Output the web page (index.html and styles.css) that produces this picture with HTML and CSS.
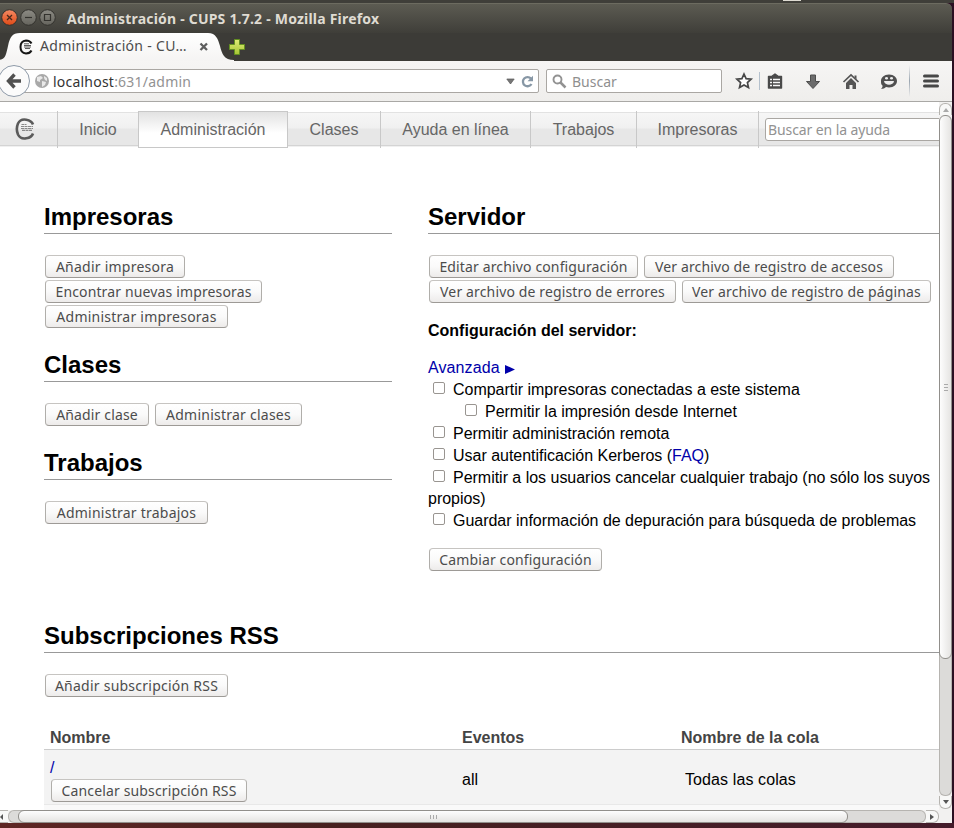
FILE: index.html
```html
<!DOCTYPE html>
<html lang="es">
<head>
<meta charset="utf-8">
<title>Administración - CUPS 1.7.2</title>
<link rel="stylesheet" href="styles.css">
</head>
<body>
<div class="desktop-top"><span class="glint"></span></div>
<div class="window">
  <header class="titlebar">
    <svg class="controls" width="57" height="20" viewBox="0 0 57 20">
      <defs>
        <linearGradient id="red" x1="0" y1="0" x2="0" y2="1"><stop offset="0" stop-color="#f58a64"/><stop offset="1" stop-color="#df4a16"/></linearGradient>
        <linearGradient id="grey" x1="0" y1="0" x2="0" y2="1"><stop offset="0" stop-color="#8c8b84"/><stop offset="1" stop-color="#65645d"/></linearGradient>
      </defs>
      <circle cx="9.500" cy="9.500" r="7.800" fill="url(#red)" stroke="#33322e"/>
      <path d="M7 7l5 5M12 7l-5 5" stroke="#47281c" stroke-width="1.300"/>
      <circle cx="28.500" cy="9.500" r="7.800" fill="url(#grey)" stroke="#33322e"/>
      <path d="M25 9.500h7" stroke="#33322e" stroke-width="1.200"/>
      <circle cx="47.500" cy="9.500" r="7.800" fill="url(#grey)" stroke="#33322e"/>
      <path d="M44.500 6.500h6v6h-6z" fill="none" stroke="#33322e" stroke-width="1.200"/>
    </svg>
    <span class="window-title">Administración - CUPS 1.7.2 - Mozilla Firefox</span>
  </header>

  <div class="tabstrip">
    <div class="tab">
      <svg class="tab-shape" width="234" height="29" viewBox="0 0 234 29">
        <defs><linearGradient id="tabfill" x1="0" y1="0" x2="0" y2="1"><stop offset="0" stop-color="#fff"/><stop offset="1" stop-color="#f5f4f3"/></linearGradient></defs>
        <path d="M-2 28C6 28 6 22 8 14C10 5 12 1 20 1H208C216 1 218 7 220 14C222 22 224 28 234 28V29H-2z" fill="url(#tabfill)"/>
      </svg>
      <div class="tab-content">
        <svg width="14" height="16" viewBox="0 0 14 16"><path d="M12.500 4.500Q11 1.500 7 1.500Q1.500 2 1.500 8T7 14.500Q11 14.500 12.500 11.500" fill="none" stroke="#161616" stroke-width="2"/><path d="M5 4.800h5M5 6.500h7M5 8h7M6 9.500h5" stroke="#333" stroke-width=".8"/></svg>
        <span class="tab-title">Administración - CU…</span>
        <svg width="10" height="10" viewBox="0 0 10 10"><path d="M1.500 1.500l6.500 6.500M8 1.500l-6.500 6.500" stroke="#5d5d5d" stroke-width="2.300"/></svg>
      </div>
    </div>
    <svg class="new-tab" width="18" height="18" viewBox="0 0 18 18"><defs><linearGradient id="plus" x1="0" y1="0" x2="0" y2="1"><stop offset="0" stop-color="#e0ec77"/><stop offset="1" stop-color="#a5c434"/></linearGradient></defs><path d="M6.500 1.500h5v5h5v5h-5v5h-5v-5h-5v-5h5z" fill="url(#plus)" stroke="#638f20"/></svg>
  </div>

  <div class="toolbar">
    <svg class="back" width="30" height="34" viewBox="0 0 30 34"><circle cx="14" cy="17" r="15.500" fill="#fbfbfb" stroke="#8e9aa8"/><path d="M14.500 10.500L8.500 17l6 6.500M9 17h12" fill="none" stroke="#505050" stroke-width="3.400"/></svg>
    <div class="urlbar">
      <svg width="14" height="14" viewBox="0 0 14 14"><circle cx="7" cy="7" r="7" fill="#a9a9a9"/><path d="M2 3l4-1 2 2-3 2v2L2 7zM9 2l3 2v3l-2-1-1-2zM7 7l4 1-1 3-3 2z" fill="#e9e9e9"/></svg>
      <span class="host">localhost</span><span class="path">:631/admin</span>
      <svg class="dropmark" width="9" height="7" viewBox="0 0 9 7"><path d="M.8 1h7.400L4.500 6z" fill="#777" stroke="#555" stroke-width=".7"/></svg>
      <svg width="13" height="13" viewBox="0 0 13 13"><path d="M10 3.600A4.600 4.600 0 1 0 10.500 9" fill="none" stroke="#8797a5" stroke-width="2.300"/><path d="M6.500 6.200h5.500V.7z" fill="#8797a5"/></svg>
    </div>
    <div class="searchbar">
      <svg width="15" height="15" viewBox="0 0 15 15"><circle cx="5.500" cy="5.500" r="4" fill="none" stroke="#929292" stroke-width="1.900"/><path d="M8.500 8.500l5 5" stroke="#929292" stroke-width="2.500"/></svg>
      <span>Buscar</span>
    </div>
    <svg class="tools" width="230" height="40" viewBox="0 0 230 40">
      <defs><linearGradient id="sep" x1="0" y1="0" x2="0" y2="1"><stop offset="0" stop-color="#9aa5b0" stop-opacity="0"/><stop offset=".5" stop-color="#9aa5b0"/><stop offset="1" stop-color="#9aa5b0" stop-opacity="0"/></linearGradient></defs>
      <path d="M22 13l2.100 4.600 5 .5-3.700 3.500 1.100 5-4.500-2.600-4.500 2.600 1.100-5-3.700-3.500 5-.5z" fill="#fff" stroke="#474747" stroke-width="1.700"/>
      <path d="M37.500 11v18" stroke="#b5c1cd"/>
      <path d="M46.500 15.500h3l3.500-2.500 3.500 2.500h3v11.500h-13z" fill="#494949" stroke="#494949" stroke-width="1.400" stroke-linejoin="round"/>
      <path d="M48 18.500h2M48 21.500h2M48 24.500h2M51 18.500h7M51 21.500h7M51 24.500h7" stroke="#f7f7f7" stroke-width="1.700"/>
      <path d="M88.500 14h5v6.500h4L91 27.500l-6.500-7h4z" fill="#6c6c6c" stroke="#4d4d4d"/>
      <path d="M121.500 21L129 14l7.500 7" fill="none" stroke="#555" stroke-width="1.700"/><path d="M124 22l5-5 5 5v6h-3.500v-4h-3v4H124zM132.500 14.500h2v4l-2-2z" fill="#555"/>
      <path d="M167 13.500c5 0 8 3 8 6.500s-3 6.500-8 6.500c-1.200 0-2 0-3-.4-1 1.200-3 2-5 2 1-1 1.500-2 1.600-3.300C159 23.500 159 22 159 20c0-3.500 3-6.500 8-6.500z" fill="#505050"/>
      <ellipse cx="164.500" cy="17.300" rx="1.500" ry="1.200" fill="#eee"/><ellipse cx="169.500" cy="17.300" rx="1.500" ry="1.200" fill="#eee"/><path d="M162 20h10c-.5 5-9.500 5-10 0z" fill="#eee"/>
      <path d="M187 4h1v32h-1z" fill="url(#sep)"/>
      <path d="M202.500 15h13M202.500 20h13M202.500 25h13" stroke="#474747" stroke-width="3" stroke-linecap="round"/>
    </svg>
  </div>

  <div class="viewport">
    <main class="page">
      <nav class="nav">
        <a class="logo"><svg width="20" height="22" viewBox="0 0 20 22"><path d="M18 6.500C16.500 2 6.500-1.500 3 5.500C1.500 9 1.500 13 3 16.500C6.500 23.500 16.500 20 18 15.500" fill="none" stroke="#5a5a5a" stroke-width="2.600"/><path d="M6.500 6.500h5M6 8.500h12M6 10.500h12M7 12.400h10" stroke="#888" stroke-width="1.100" stroke-dasharray="3 .5"/></svg></a>
        <a class="n-inicio">Inicio</a><a class="n-admin active">Administración</a><a class="n-clases">Clases</a><a class="n-ayuda">Ayuda en línea</a><a class="n-trabajos">Trabajos</a><a class="n-impresoras">Impresoras</a>
        <div class="help"><div class="help-input">Buscar en la ayuda</div></div>
      </nav>
      <div class="columns">
        <section class="left">
          <h2>Impresoras</h2>
          <div class="buttons"><button class="w140">Añadir impresora</button></div>
          <div class="buttons"><button class="w217">Encontrar nuevas impresoras</button></div>
          <div class="buttons"><button class="w183">Administrar impresoras</button></div>
          <h2>Clases</h2>
          <div class="buttons"><button class="w104">Añadir clase</button><button class="w147">Administrar clases</button></div>
          <h2>Trabajos</h2>
          <div class="buttons"><button class="w163">Administrar trabajos</button></div>
        </section>
        <section class="right">
          <h2>Servidor</h2>
          <div class="buttons"><button class="w209">Editar archivo configuración</button><button class="w250">Ver archivo de registro de accesos</button></div>
          <div class="buttons"><button class="w247">Ver archivo de registro de errores</button><button class="w249">Ver archivo de registro de páginas</button></div>
          <p class="config-title">Configuración del servidor:</p>
          <div class="options">
            <div class="option"><a class="link advanced">Avanzada<svg width="10" height="9" viewBox="0 0 10 9"><path d="M0 0l10 4.500L0 9z" fill="#00a"/></svg></a></div>
            <div class="option"><i class="check"></i>Compartir impresoras conectadas a este sistema</div>
            <div class="option nested"><i class="check"></i>Permitir la impresión desde Internet</div>
            <div class="option"><i class="check"></i>Permitir administración remota</div>
            <div class="option"><i class="check"></i>Usar autentificación Kerberos (<a class="link">FAQ</a>)</div>
            <div class="option"><i class="check"></i>Permitir a los usuarios cancelar cualquier trabajo (no sólo los suyos</div>
            <div class="option wrapped">propios)</div>
            <div class="option"><i class="check"></i>Guardar información de depuración para búsqueda de problemas</div>
          </div>
          <div class="buttons"><button class="w173">Cambiar configuración</button></div>
        </section>
      </div>
      <section class="rss">
        <h2>Subscripciones RSS</h2>
        <div class="buttons"><button class="w183">Añadir subscripción RSS</button></div>
        <div class="row head"><span>Nombre</span><span>Eventos</span><span>Nombre de la cola</span></div>
        <div class="row body">
          <div class="name"><a class="link">/</a><button class="w196">Cancelar subscripción RSS</button></div>
          <span>all</span><span class="queue">Todas las colas</span>
        </div>
        <div class="next-row"></div>
      </section>
    </main>
    <div class="vscroll">
      <div class="v-up"><svg width="6" height="4" viewBox="0 0 6 4"><path d="M3 0l3 4H0z" fill="#aaa"/></svg></div>
      <div class="v-thumb"><i></i><i></i><i></i></div>
      <div class="v-track"></div>
      <div class="v-down"><svg width="6" height="4" viewBox="0 0 6 4"><path d="M0 0h6L3 4z" fill="#555"/></svg></div>
    </div>
  </div>
  <div class="hscroll">
    <div class="h-left"><svg width="3" height="6" viewBox="0 0 3 6"><path d="M3 0v6L0 3z" fill="#555"/></svg></div>
    <div class="h-track-left"></div>
    <div class="h-thumb"><i></i><i></i><i></i></div>
    <div class="h-track"></div>
    <div class="h-right"><svg width="4" height="6" viewBox="0 0 4 6"><path d="M0 0v6l4-3z" fill="#555"/></svg></div>
  </div>
</div>
</body>
</html>
```
FILE: styles.css
```css
* { box-sizing: border-box; }
body {
  margin: 0; width: 954px; height: 828px; overflow: hidden;
  background: linear-gradient(90deg, #5f2624, #47201f 35%, #451c2b);
  font: 16px/21px "Liberation Sans", Arial, sans-serif; color: #000;
}
svg { display: block; flex: none; }
.desktop-top { height: 3px; background: #3f3e39; padding-left: 783px; }
.glint { display: block; width: 18px; height: 1px; background: #dedbd2; }
.window { width: 954px; height: 820px; border-right: 2px solid #2b0f22; background: linear-gradient(#2b0f22 0 20px, #f4f3f2 20px); }

.titlebar, .tabstrip, .toolbar, .searchbar, .urlbar, .tab-title, button, .help-input {
  font-family: "Noto Sans", "Open Sans", sans-serif;
}
.titlebar {
  height: 30px; display: flex; align-items: center; padding-bottom: 1px;
  background: linear-gradient(#5c5b52, #3f3e39); border-top: 1px solid #6c6b60; border-top-right-radius: 6px;
}
.controls { margin-right: 10px; }
.window-title { font-size: 14px; font-weight: 700; color: #dfdbd2; white-space: nowrap; letter-spacing: .21px; }
.tabstrip { height: 28px; display: flex; background: #3c3b37; }
.tab { width: 228px; height: 28px; position: relative; }
.tab-shape { position: absolute; left: 0; top: -1px; }
.tab-content { position: relative; display: flex; align-items: center; height: 28px; padding-left: 19px; }
.tab-title { font-size: 14px; line-height: 20px; color: #4c4c4c; margin: 0 0 2px 7px; width: 159px; white-space: nowrap; letter-spacing: .3px; }
.new-tab { margin-top: 5px; }
.toolbar {
  height: 41px; display: flex; align-items: center;
  background: linear-gradient(#f6f5f4, #efeeec); border-bottom: 1px solid #a9a8a5;
}
.back { margin-right: -8px; position: relative; z-index: 1; }
.urlbar {
  width: 517px; height: 24px; display: flex; align-items: center; padding: 0 4px 0 12px;
  background: #fff; border: 1px solid #aaa7a3; border-radius: 2px; font-size: 14px; flex: none; letter-spacing: .22px;
}
.host { color: #333; margin-left: 4px; }
.path { color: #929292; }
.dropmark { margin-left: auto; margin-right: 6px; }
.searchbar {
  margin-left: 7px; width: 176px; height: 24px; display: flex; align-items: center; gap: 5px; padding-left: 5px;
  background: #fff; border: 1px solid #aaa7a3; border-radius: 2px; color: #8f8f8f; font-size: 14px; flex: none;
}
.tools { flex: none; }

.viewport { height: 708px; display: flex; }
.page { width: 939px; height: 708px; background: #fff; overflow: hidden; flex: none; }

.nav { margin-top: 9px; height: 37px; display: flex; color: #666; }
.nav > * {
  border-right: 1px solid #c8c8c8; text-align: center; line-height: 38px; flex: none;
  background: linear-gradient(#fff 0 1px, #e2e2e2 1px 2px, #f6f6f6 2px, #f0f0f0 17px, #e7e7e7 18px, #e7e7e7 34px, #d4d4d4 34px 35px, #f0f0f0 35px 36px, #fff 36px);
}
.nav .active {
  background: linear-gradient(#e2e2e2, #fff 60%); border: 1px solid #c8c8c8; border-left: 0; line-height: 35px;
}
.logo { width: 58px; padding: 7px 0 0 15px; }
.n-inicio { width: 81px; }
.n-admin { width: 149px; }
.n-clases { width: 93px; }
.n-ayuda { width: 150px; }
.n-trabajos { width: 106px; }
.n-impresoras { width: 122px; }
.nav .help { width: 180px; border: 0; padding: 7px 0 0 6px; overflow: hidden; }
.help-input {
  width: 200px; height: 23px; line-height: 22px; padding-left: 2px; text-align: left;
  border: 1px solid #aaa7a3; border-radius: 3px; background: #fff; color: #929292; font-size: 14px; letter-spacing: -.1px;
}

h2 { font-size: 24px; line-height: 32px; height: 33px; margin: 21px 0; border-bottom: 1px solid #999; }
.columns { display: flex; padding-left: 44px; height: 451px; padding-top: 32px; }
.left { width: 348px; margin-right: 36px; }
.right { width: 511px; }
.buttons { display: flex; gap: 6px; padding-left: 1px; }
.buttons + .buttons { margin-top: 2px; }
button {
  height: 23px; padding: 0; border: 1px solid #b5b2ae; border-color: #c6c4c1 #b0aeaa #9d9a96; border-radius: 4px;
  background: linear-gradient(#fff, #fafafa 50%, #edebea); color: #4c4c4c; font-size: 14px; line-height: 21px;
  white-space: nowrap; flex: none; display: block; letter-spacing: .14px;
}
.w104 { width: 104px; } .w140 { width: 140px; } .w147 { width: 147px; } .w163 { width: 163px; }
.w173 { width: 173px; } .w183 { width: 183px; } .w196 { width: 196px; } .w209 { width: 209px; }
.w217 { width: 217px; } .w247 { width: 247px; } .w249 { width: 249px; } .w250 { width: 250px; }
.w140, .w147, .w163, .w183 { letter-spacing: .24px; }
.config-title { margin: 17px 0 16px; font-weight: 700; line-height: 21px; }
.options { margin-bottom: 16px; }
.option { height: 22px; line-height: 22px; display: flex; white-space: nowrap; letter-spacing: -.02px; }
.option.nested { padding-left: 32px; }
.option.wrapped { height: 21px; line-height: 20px; }
.check { width: 12px; height: 12px; margin: 3px 8px 0 5px; border: 1px solid #999591; border-radius: 2px; background: #fff; flex: none; }
.link { color: #00a; }
.advanced { display: flex; gap: 5px; letter-spacing: .1px; }
.advanced svg { margin-top: 8px; }

.rss { padding-left: 44px; margin-top: 21px; }
.rss h2 { margin-top: 0; }
.row { display: grid; grid-template-columns: 412px 219px 1fr; padding-left: 6px; align-items: center; }
.head { margin-top: 29px; height: 24px; color: #444; font-weight: 700; line-height: 24px; align-items: start; border-bottom: 1px solid #ccc; }
.body { height: 55px; background: #f3f3f3; border-bottom: 1px solid #e8e8e8; padding-top: 4px; }
.name { height: 51px; }
.name .link { display: block; line-height: 27px; height: 25px; }
.name button { margin-left: 1px; }
.queue { padding-left: 4px; letter-spacing: .1px; }
.next-row { height: 10px; background: #f9f9f9; }

.vscroll { width: 13px; height: 708px; padding-top: 1px; display: flex; flex-direction: column; background: #f2f1f0; }
.v-up, .v-down { height: 12px; display: flex; align-items: center; justify-content: center; border: 1px solid #b6b4b0; background: #f8f8f7; flex: none; }
.v-up { border-radius: 6px 6px 0 0; border-bottom: 0; }
.v-thumb {
  height: 544px; border: 1px solid #918f8b; border-radius: 6px; background: linear-gradient(90deg, #fdfdfd, #e5e4e2);
  display: flex; flex-direction: column; align-items: center; justify-content: center; gap: 2px; flex: none;
  position: relative; z-index: 1;
}
.v-thumb i { width: 4px; height: 1px; background: #aaa; }
.v-track { flex: 1; background: #dcdbd9; border: 1px solid #b6b4b0; border-top: 0; border-radius: 0 0 6px 6px; margin-top: -6px; }
.v-down { border-radius: 0 0 6px 6px; height: 13px; border-top: 0; margin-bottom: 1px; }
.hscroll { height: 13px; display: flex; background: #f2f1f0; }
.hscroll > * { border: 1px solid #b6b4b0; flex: none; }
.h-left { width: 8px; border-left: 0; border-right: 0; display: flex; align-items: center; background: #f8f8f7; }
.h-track-left { width: 16px; background: #dcdbd9; border-radius: 6px 0 0 6px; border-right: 0; }
.hscroll .h-thumb {
  width: 830px; margin-left: -6px; border-color: #918f8b; border-radius: 6px; background: linear-gradient(#fdfdfd, #e5e4e2);
  display: flex; align-items: center; justify-content: center; gap: 2px; position: relative; z-index: 1;
}
.h-thumb i { width: 1px; height: 4px; background: #aaa; }
.h-track { width: 84px; margin-left: -6px; background: #dcdbd9; border-left: 0; border-radius: 0 6px 6px 0; }
.h-right { width: 13px; display: flex; align-items: center; justify-content: center; border-left: 0; border-radius: 0 6px 6px 0; background: #f8f8f7; }
```
